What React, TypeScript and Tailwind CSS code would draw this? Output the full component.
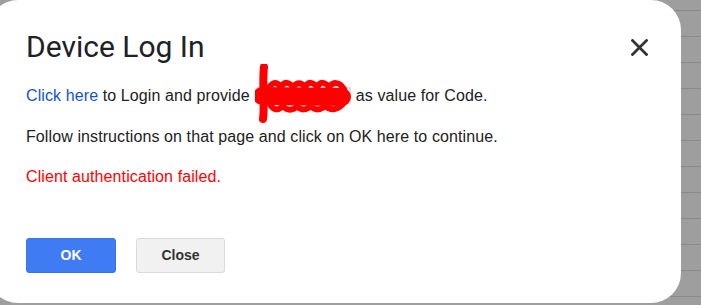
import React from "react";

function Scribble() {
  return (
    <svg
      width="106"
      height="60"
      viewBox="0 0 106 60"
      className="absolute left-[-2px] top-[-23px] pointer-events-none"
    >
      <path
        d="M9 3 C7 20 10 40 8 55"
        stroke="#ff0000"
        strokeWidth="8"
        strokeLinecap="round"
        fill="none"
      />
      <path
        d="M7 32 L87 33"
        stroke="#ff0000"
        strokeWidth="18"
        strokeLinecap="round"
        fill="none"
      />
      <path
        d="M14 24 C18 17 22 18 26 23 C30 17 34 18 38 23 C42 18 46 18 50 23 C54 17 58 18 62 23 C66 17 70 18 74 23 C78 18 84 17 89 25"
        stroke="#ff0000"
        strokeWidth="6"
        strokeLinecap="round"
        strokeLinejoin="round"
        fill="none"
      />
      <path
        d="M16 42 C20 47 24 46 28 42 C32 47 38 47 42 42 C46 47 52 46 56 42 C60 47 66 46 70 42 C76 47 82 46 87 41"
        stroke="#ff0000"
        strokeWidth="6"
        strokeLinecap="round"
        fill="none"
      />
    </svg>
  );
}

export default function App() {
  const rows = Array.from({ length: 11 });
  return (
    <div className="relative w-[701px] h-[305px] overflow-hidden bg-[#9e9e9e]">
      <div className="flex flex-col">
        <div className="h-[11px] border-b border-[#8a8a8a]" />
        {rows.map((_, i) => (
          <div key={i} className="h-[26px] border-b border-[#8a8a8a]" />
        ))}
      </div>
      <div
        className="absolute left-[-12px] top-0 w-[693px] h-[303px] bg-white rounded-[30px] pl-[38px] pr-[33px] pt-[32px] flex flex-col"
        style={{ fontFamily: '"Liberation Sans", Arial, sans-serif' }}
      >
        <div className="flex items-center justify-between h-[30px]">
          <h1
            className="text-[30px] leading-[30px] text-[#202124] font-normal"
            style={{ fontFamily: 'Roboto, "Liberation Sans", sans-serif' }}
          >
            Device Log In
          </h1>
          <svg width="17" height="17" viewBox="0 0 17 17">
            <path
              d="M1.5 1.5 L15.5 15.5 M15.5 1.5 L1.5 15.5"
              stroke="#333333"
              strokeWidth="2.7"
              strokeLinecap="square"
            />
          </svg>
        </div>
        <p className="mt-[24px] text-[16px] leading-[20px] tracking-[0.1px] text-[#222222] whitespace-nowrap">
          <span className="text-[#1155cc]">Click here</span> to Login and provide{" "}
          <span className="relative inline-block align-[-3px] w-[94px] h-[17px] ml-[3px] bg-[#dedede]">
            <Scribble />
          </span>{" "}
          as value for Code.
        </p>
        <p className="mt-[21px] text-[16px] leading-[20px] tracking-[0.1px] text-[#222222] whitespace-nowrap">
          Follow instructions on that page and click on OK here to continue.
        </p>
        <p className="mt-[20px] text-[16px] leading-[20px] tracking-[0.1px] text-[#ff0000]">
          Client authentication failed.
        </p>
        <div className="mt-[51px] flex gap-[20px]">
          <button className="w-[90px] h-[35px] rounded-[3px] bg-[#3f7bf3] border border-[#3a73e6] text-white text-[14px] font-bold">
            OK
          </button>
          <button className="w-[89px] h-[35px] rounded-[3px] bg-[#f1f1f1] border border-[#dadada] text-[#333333] text-[14px] font-bold">
            Close
          </button>
        </div>
      </div>
    </div>
  );
}
